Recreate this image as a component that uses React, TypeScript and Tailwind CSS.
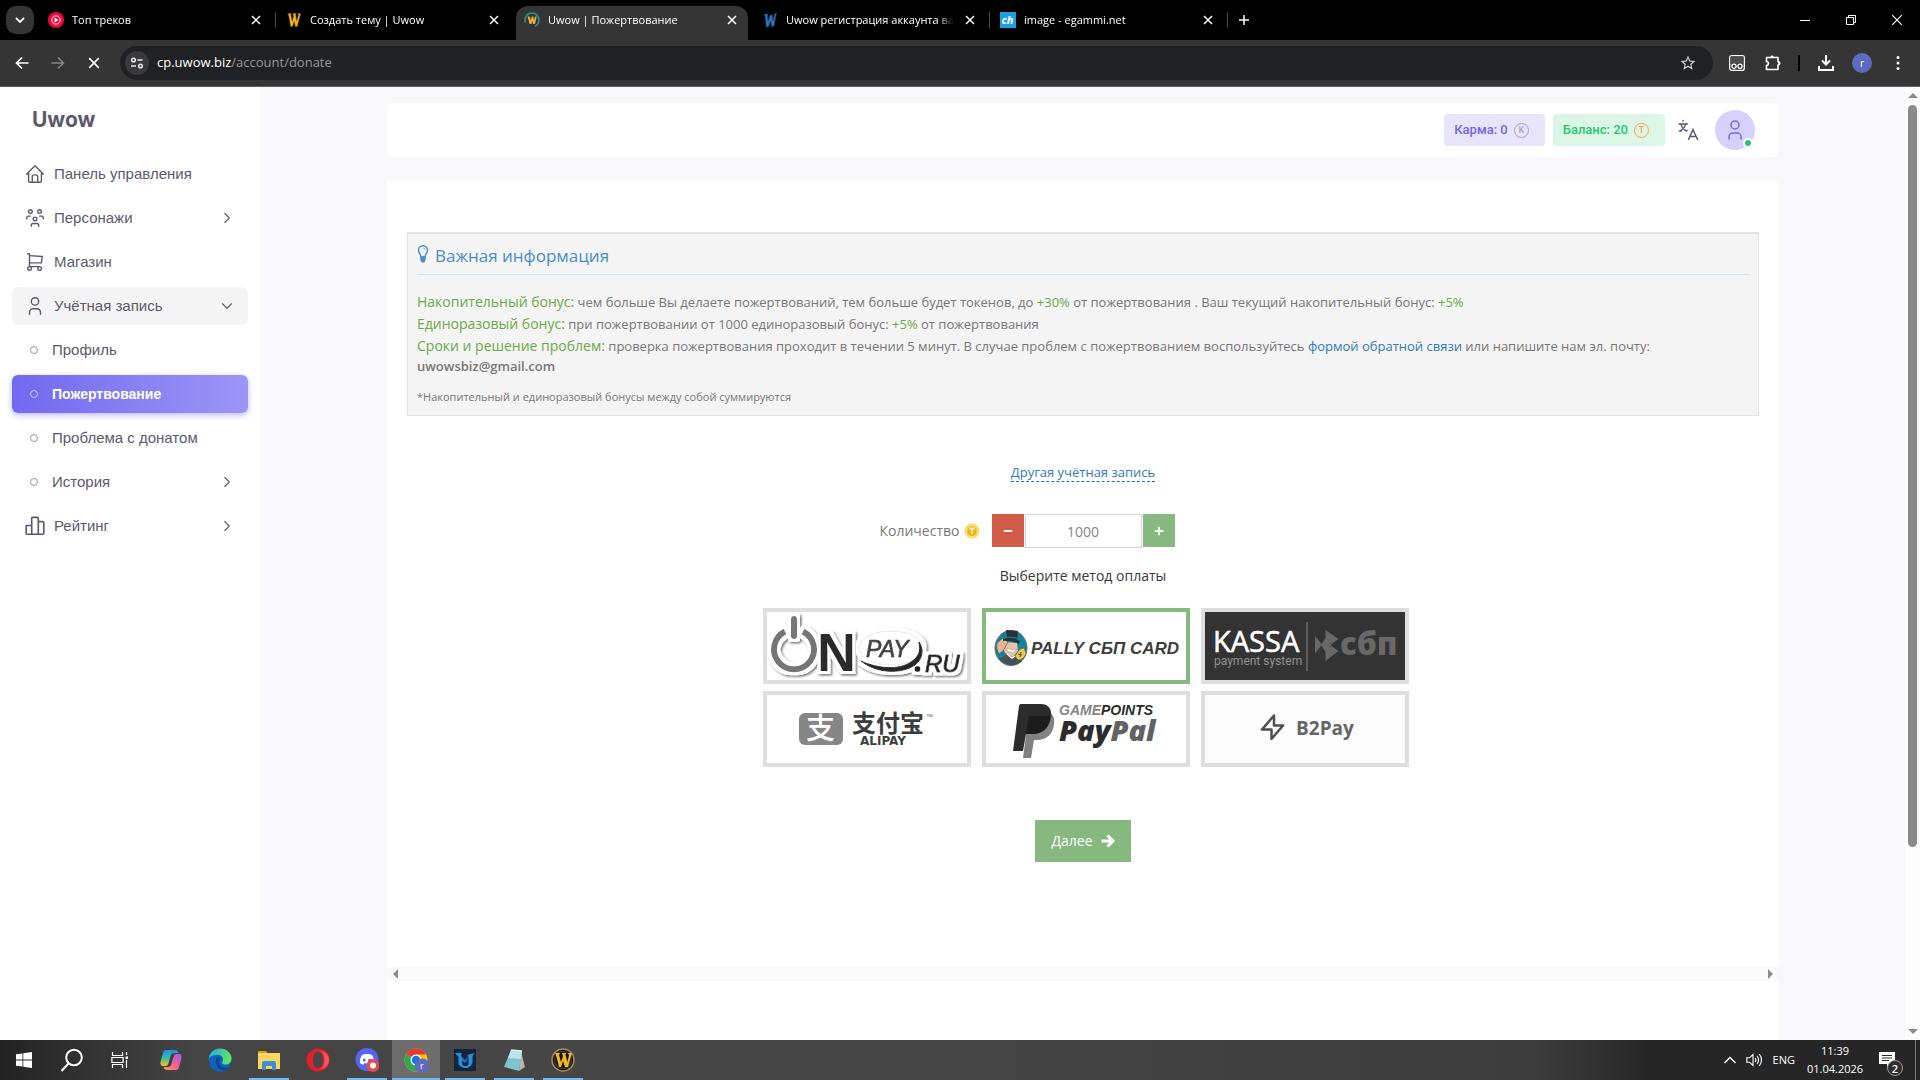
import { useState } from "react";
import type { ReactNode } from "react";
import { TbHome, TbUser, TbUsersGroup, TbShoppingCart, TbChevronDown, TbChevronRight } from "react-icons/tb";
import { FaMinus, FaPlus } from "react-icons/fa";
import { MdStarOutline } from "react-icons/md";

const uiFont = "font-['Open_Sans','Noto_Sans',sans-serif]";
const menuFont = "font-['Liberation_Sans',Arial,sans-serif]";

const BROWSER_TABS = [
  { title: "Топ треков", icon: "music", active: false },
  { title: "Создать тему | Uwow", icon: "gold", active: false },
  { title: "Uwow | Пожертвование", icon: "ring", active: true },
  { title: "Uwow регистрация аккаунта варкрафт", icon: "blue", active: false },
  { title: "image - egammi.net", icon: "ch", active: false },
] as const;

function Favicon({ kind }: { kind: string }) {
  return (
    <svg viewBox="0 0 16 16" className="size-4 shrink-0" aria-hidden="true">
      {kind === "music" && (
        <>
          <circle cx="8" cy="8" r="8" fill="#f5063d" />
          <circle cx="8" cy="8" r="4.2" fill="none" stroke="#fff" strokeWidth="0.9" />
          <path d="M6.6 5.6v4.8L10.4 8z" fill="#fff" />
        </>
      )}
      {kind === "gold" && (
        <path d="M1.5 1.5h4l-.6 1.3L6.2 9 7.6 4 6.8 1.5h3.4L9.7 3l1 6 1.7-6-.8-1.5h3.1l-3.4 13h-2L8.2 9.5l-1.6 5h-2L2.6 3z" fill="#efb428" stroke="#7a4a05" strokeWidth="0.5" />
      )}
      {kind === "ring" && (
        <>
          <path d="M1.4 10.5A7 7 0 1 1 11 14.4" fill="none" stroke="#2f8e9b" strokeWidth="1.6" />
          <path d="M3.5 4.5h2.3l1 4 1-4h1.5l.9 4 .9-4h1.7L11 12H9.2L8.4 9l-1 3H5.6z" fill="#e9b23c" />
        </>
      )}
      {kind === "blue" && (
        <path d="M2 2h4l-.5 2 .7 5L8 3h2.5l.4 6 1.6-7 2-1.5L12 14l-2.4.8L8.5 9l-2 6H4.3L3 4z" fill="#2f72b5" stroke="#173f71" strokeWidth="0.6" />
      )}
      {kind === "ch" && (
        <>
          <rect width="16" height="16" fill="#1ba1e2" />
          <text x="1.5" y="12" fontSize="11" fontWeight="700" fontStyle="italic" fill="#fff" fontFamily="Open Sans">ch</text>
        </>
      )}
    </svg>
  );
}

function CloseGlyph({ className }: { className: string }) {
  return (
    <svg viewBox="0 0 10 10" className={className} stroke="currentColor" fill="none" aria-hidden="true">
      <path d="M1 1l8 8M9 1l-8 8" />
    </svg>
  );
}

function TabStrip() {
  return (
    <div className="flex h-10 shrink-0 items-end bg-black text-white">
      <button type="button" aria-label="Поиск вкладок" className="mb-1.5 ml-1.5 mr-1.5 flex size-7 items-center justify-center rounded-[10px] bg-[#353535]">
        <svg viewBox="0 0 10 10" className="size-2.5" fill="none" stroke="#fff" strokeWidth="1.8">
          <path d="M1 3l4 4 4-4" />
        </svg>
      </button>
      <div className="flex gap-1.5">
        {BROWSER_TABS.map((tab, i) => (
          <div
            key={tab.title}
            className={`relative flex h-[34px] w-[232px] items-center px-2 pb-1.5 ${
              tab.active ? "rounded-t-xl bg-[#353535]" : ""
            }`}
          >
            <Favicon kind={tab.icon} />
            <span className="ml-2 flex-1 overflow-hidden whitespace-nowrap text-[11px] leading-4 [mask-image:linear-gradient(90deg,#000_90%,transparent)]">
              {tab.title}
            </span>
            <button type="button" aria-label="Закрыть" className="ml-2 flex size-4 items-center justify-center">
              <CloseGlyph className="size-2.5 stroke-[1.5]" />
            </button>
            {(i === 0 || i > 2) && <span className="absolute -right-1 top-1.5 h-4 w-px bg-[#4a4a4a]" />}
          </div>
        ))}
      </div>
      <button type="button" aria-label="Новая вкладка" className="mb-1.5 ml-1.5 flex size-7 items-center justify-center">
        <svg viewBox="0 0 12 12" className="size-3" stroke="#fff" strokeWidth="1.5">
          <path d="M6 1v10M1 6h10" />
        </svg>
      </button>
      <div className="ml-auto flex h-10 items-center">
        <button type="button" aria-label="Свернуть" className="flex h-10 w-[46px] items-center justify-center">
          <span className="h-px w-2.5 bg-white" />
        </button>
        <button type="button" aria-label="Восстановить" className="flex h-10 w-[46px] items-center justify-center">
          <svg viewBox="0 0 10 10" className="size-2.5" fill="none" stroke="#fff">
            <path d="M.5 2.5h7v7h-7zM2.5 2.5v-2h7v7h-2" />
          </svg>
        </button>
        <button type="button" aria-label="Закрыть окно" className="flex h-10 w-[46px] items-center justify-center">
          <CloseGlyph className="size-3" />
        </button>
      </div>
    </div>
  );
}

function Toolbar() {
  return (
    <div className="flex h-[47px] shrink-0 items-center border-b border-[#5c5c5c] bg-[#353535] pl-2.5 pr-5 text-white">
      <button type="button" aria-label="Назад" className="flex size-6 items-center justify-center">
        <svg viewBox="0 0 14 14" className="size-3.5" fill="none" stroke="#fff" strokeWidth="1.7">
          <path d="M13.5 7H1.5M7 1.5L1.5 7 7 12.5" />
        </svg>
      </button>
      <button type="button" aria-label="Вперёд" className="ml-3 flex size-6 items-center justify-center">
        <svg viewBox="0 0 14 14" className="size-3.5" fill="none" stroke="#858585" strokeWidth="1.5">
          <path d="M.5 7h12M7 1.5L12.5 7 7 12.5" />
        </svg>
      </button>
      <button type="button" aria-label="Остановить" className="ml-3 flex size-6 items-center justify-center">
        <CloseGlyph className="size-3 stroke-[1.4]" />
      </button>
      <div className="ml-3.5 flex h-[34px] flex-1 items-center rounded-full bg-[#202124] pl-[5px] pr-4">
        <span className="flex size-6 items-center justify-center rounded-full bg-[#3a3a3c]">
          <svg viewBox="0 0 14 12" className="h-3 w-3.5" fill="none" stroke="#e8e8e8" strokeWidth="1.5">
            <circle cx="3.5" cy="3" r="1.8" />
            <path d="M7.5 3h5M1 9h5" />
            <circle cx="10.5" cy="9" r="1.8" />
          </svg>
        </span>
        <span className="ml-2 flex-1 text-[13px]">
          cp.uwow.biz<span className="text-[#969696]">/account/donate</span>
        </span>
        <MdStarOutline className="size-[18px] text-[#d0d0d0]" />
      </div>
      <svg viewBox="0 0 16 16" className="ml-4 size-4" fill="none" stroke="#fff" strokeWidth="1.3">
        <rect x="0.7" y="0.7" width="14.6" height="14.6" rx="2" />
        <rect x="1.5" y="1.5" width="13" height="7" fill="#4d4d4d" stroke="none" />
        <circle cx="5" cy="11.3" r="2.1" />
        <circle cx="11" cy="11.3" r="2.1" />
      </svg>
      <svg viewBox="0 0 18 18" className="ml-[19px] size-[18px]" fill="none" stroke="#fff" strokeWidth="1.6" strokeLinejoin="round">
        <path d="M2.5 3.5h11.500v4.300c2 0 2 3.200 0 3.200v4.500H2.500v-4c2.600-.3 2.600-3.700 0-4z" />
        <path d="M6.5 3.200c0-2.200 3.200-2.200 3.200 0z" fill="#fff" stroke="none" />
        <path d="M14.5 7.600c2.600 0 2.600 3.600 0 3.600z" fill="#fff" stroke="none" />
      </svg>
      <span className="ml-4 h-4 w-0.5 bg-black" />
      <svg viewBox="0 0 16 16" className="ml-[18px] size-4" fill="none" stroke="#fff" strokeWidth="2">
        <path d="M8 0v9M4 5.5l4 4 4-4M1 11v4h14v-4" />
      </svg>
      <span className="ml-[18px] flex size-5 items-center justify-center rounded-full bg-[#5c6bc0] text-[10px] leading-none">r</span>
      <svg viewBox="0 0 4 16" className="ml-6 h-4 w-1" fill="#fff">
        <circle cx="2" cy="2.5" r="1.5" />
        <circle cx="2" cy="8" r="1.5" />
        <circle cx="2" cy="13.5" r="1.5" />
      </svg>
    </div>
  );
}

function RatingIcon() {
  return (
    <svg viewBox="0 0 20 20" fill="none" stroke="currentColor" strokeWidth="1.5" strokeLinejoin="round">
      <path d="M2 9.500h5v8H2.800a.8.8 0 0 1-.8-.8zM7 17.500V3a.8.8 0 0 1 .8-.8h4.400A.8.8 0 0 1 13 3v14.500zM13 6h4.200a.8.8 0 0 1 .8.8v9.900a.8.8 0 0 1-.8.8H13" />
    </svg>
  );
}

type MenuItem = {
  label: string;
  icon?: ReactNode;
  arrow?: "right" | "down";
  state?: "open" | "active";
};

const MENU: MenuItem[] = [
  { label: "Панель управления", icon: <TbHome /> },
  { label: "Персонажи", icon: <TbUsersGroup />, arrow: "right" },
  { label: "Магазин", icon: <TbShoppingCart /> },
  { label: "Учётная запись", icon: <TbUser />, arrow: "down", state: "open" },
  { label: "Профиль" },
  { label: "Пожертвование", state: "active" },
  { label: "Проблема с донатом" },
  { label: "История", arrow: "right" },
  { label: "Рейтинг", icon: <RatingIcon />, arrow: "right" },
];

function Sidebar() {
  return (
    <aside className={`w-[260px] shrink-0 bg-white text-[#5d596c] ${menuFont}`}>
      <div className="flex h-[62px] items-center pl-8 pt-1 font-['Inter',sans-serif] text-[21px] font-bold">Uwow</div>
      <nav className="flex flex-col gap-1.5 px-3 pt-1.5">
        {MENU.map((item) => (
          <a
            key={item.label}
            href="#"
            className={`flex h-[38px] items-center rounded-md pr-3 text-[15px] ${item.icon ? "pl-3" : "pl-4"} ${
              item.state === "active"
                ? "bg-gradient-to-r from-[#7367f0] to-[#9e95f5] font-bold text-white shadow-[0_2px_6px_rgba(115,103,240,0.48)]"
                : ""
            } ${item.state === "open" ? "bg-[#f4f4f5]" : ""}`}
          >
            {item.icon ? (
              <span className="mr-2 [&>svg]:size-[22px] [&>svg]:stroke-[1.5]">{item.icon}</span>
            ) : (
              <span className="ml-0.5 mr-3.5 size-2 rounded-full border border-current opacity-60" />
            )}
            <span className={`flex-1 ${item.state === "active" ? "text-sm" : ""}`}>{item.label}</span>
            {item.arrow === "right" && <TbChevronRight className="size-[18px] stroke-[1.5]" />}
            {item.arrow === "down" && <TbChevronDown className="size-[18px] stroke-[1.5]" />}
          </a>
        ))}
      </nav>
    </aside>
  );
}

function TokenMark({ letter }: { letter: string }) {
  return (
    <span className="flex size-[15px] items-center justify-center rounded-full border border-current text-[9px] leading-none">
      {letter}
    </span>
  );
}

function Navbar() {
  return (
    <div className="flex h-[54px] shrink-0 items-center justify-end rounded-md bg-white pr-6 font-['Roboto',sans-serif] text-[13px] font-medium">
      <span className="flex h-8 items-center rounded bg-[#e7e4fb] pl-2.5 pr-4 text-[#7367f0]">
        <span className="mr-1.5">Карма: 0</span>
        <span className="text-[#a8a6b0]">
          <TokenMark letter="K" />
        </span>
      </span>
      <span className="ml-2 flex h-8 items-center rounded bg-[#dbf5e6] pl-2.5 pr-4 text-[#28c76f]">
        <span className="mr-1.5">Баланс: 20</span>
        <span className="text-[#ff9f43]">
          <TokenMark letter="T" />
        </span>
      </span>
      <button type="button" aria-label="Язык" className="ml-3 text-[#5d596c]">
        <svg viewBox="0 0 22 22" className="size-[22px]" fill="none" stroke="currentColor" strokeWidth="1.5" strokeLinecap="round">
          <path d="M2 5h8.500M6 1.500v.5M4 5c.5 3 2.500 5.500 5.500 7M8.500 5c-.5 3-2.500 5.500-5.500 7M2.500 12h2M8 11.500h2" />
          <path d="M11.500 20.500L16 10.500l4.500 10M13 17.500h6" />
        </svg>
      </button>
      <button type="button" aria-label="Профиль" className="relative ml-4 flex size-10 items-center justify-center rounded-full bg-[#d5d1fb] text-[#7367f0]">
        <TbUser className="size-6 stroke-[1.5]" />
        <span className="absolute bottom-0.5 right-0.5 size-2.5 rounded-full border-2 border-white bg-[#28c76f]" />
      </button>
    </div>
  );
}

function InfoPanel() {
  return (
    <section className="mx-5 mt-[51px] border border-t-2 border-[#e3e3e3] bg-[#f4f4f4] px-[9px] pb-2 text-[13px] text-[#777]">
      <h2 className="flex h-[41px] items-center gap-1.5 border-b border-[#cfe2f2] pt-1 text-[17px] text-[#478fca]">
        <svg viewBox="0 0 12 20" className="mb-1 h-[18px] w-3" fill="none" stroke="currentColor" strokeWidth="1.6">
          <path d="M3.8 13.5C3.8 10.5 1 9.300 1 5.800a5 5 0 0 1 10 0c0 3.500-2.800 4.700-2.800 7.700z" />
          <path d="M6.5 3.5c1 .2 1.600.8 1.800 1.800" strokeWidth="1" />
          <path d="M3 12.500h6v4L7.500 19.500h-3L3 16.500z" fill="currentColor" stroke="none" />
        </svg>
        Важная информация
      </h2>
      <div className="pt-4 leading-[22px]">
        <p>
          <span className="text-sm leading-[22px] text-[#69aa46]">Накопительный бонус:</span> чем больше Вы делаете пожертвований, тем
          больше будет токенов, до <span className="text-[#69aa46]">+30%</span> от пожертвования . Ваш текущий накопительный бонус:{" "}
          <span className="text-[#69aa46]">+5%</span>
        </p>
        <p>
          <span className="text-sm leading-[22px] text-[#69aa46]">Единоразовый бонус:</span> при пожертвовании от 1000 единоразовый
          бонус: <span className="text-[#69aa46]">+5%</span> от пожертвования
        </p>
        <p>
          <span className="text-sm leading-[22px] text-[#69aa46]">Сроки и решение проблем:</span> проверка пожертвования проходит в
          течении 5 минут. В случае проблем с пожертвованием воспользуйтесь{" "}
          <a href="#" className="text-[#337ab7]">
            формой обратной связи
          </a>{" "}
          или напишите нам эл. почту: <b className="block font-semibold leading-[18px]">uwowsbiz@gmail.com</b>
        </p>
      </div>
      <p className="pt-3 text-[11px] leading-5">*Накопительный и единоразовый бонусы между собой суммируются</p>
    </section>
  );
}

function OnpayLogo() {
  return (
    <svg viewBox="0 0 200 68" className="h-full w-full overflow-visible">
      <defs>
        <filter id="lift" x="-10%" y="-10%" width="120%" height="125%">
          <feMorphology in="SourceAlpha" operator="dilate" radius="3" result="fat" />
          <feFlood floodColor="#fff" />
          <feComposite in2="fat" operator="in" result="halo" />
          <feDropShadow in="halo" dx="1.5" dy="1.5" stdDeviation="1" floodColor="#000" floodOpacity="0.55" result="sh" />
          <feMerge>
            <feMergeNode in="sh" />
            <feMergeNode in="SourceGraphic" />
          </feMerge>
        </filter>
      </defs>
      <g filter="url(#lift)">
        <path d="M18 19.500a20 20 0 1 0 18 0" fill="none" stroke="#757575" strokeWidth="6" />
        <path d="M27 7v17" stroke="#777" strokeWidth="6" strokeLinecap="round" />
        <text x="50" y="59" fontSize="54" fontWeight="700" fill="#2a2a2a" fontFamily="Liberation Sans">N</text>
        <ellipse cx="124" cy="36" rx="32" ry="17" fill="#fff" stroke="#ddd" strokeWidth="0.7" />
        <path d="M94 49c18 8 38 9 50 1 8-5 10-11 8-20 5 8 4 17-4 23-14 10-40 8-54-4z" fill="#262626" stroke="#262626" />
        <text x="99" y="45" fontSize="23" fontStyle="italic" fill="#444" stroke="#444" strokeWidth="0.7" fontFamily="Liberation Sans">PAY</text>
        <circle cx="150.5" cy="57" r="3" fill="#222" />
        <text x="158" y="60" fontSize="24" fontStyle="italic" fill="#222" stroke="#222" strokeWidth="1" fontFamily="Liberation Sans">RU</text>
      </g>
    </svg>
  );
}

function PallyLogo() {
  return (
    <svg viewBox="0 0 200 68" className="h-full w-full">
      <ellipse cx="25" cy="36" rx="16" ry="17.5" fill="#148399" stroke="#5d6f73" />
      <path d="M13 47l8-5 9 3 6 4c-5 5-16 6-23-2z" fill="#4b5054" />
      <path d="M19 30l12 1 1 8-5 6-8-4-2-5z" fill="#eac3a4" />
      <path d="M11 31l6-5 5 4-5 9-4 3c-2-3-3-7-2-11z" fill="#e3b596" stroke="#4c4a48" strokeWidth="0.6" />
      <path d="M17 27l4-1-1-8 12 1-1 9 3 1-1 3c-5-3-12-4-16-3z" fill="#263238" />
      <path d="M21 25l10 1" stroke="#148399" />
      <path d="M21 36l5 2 5-1-4 4-6-2z" fill="#fff" stroke="#777" strokeWidth="0.4" />
      <path d="M34 37l4-1 2 5c-1 4-4 7-8 7l-3-4z" fill="#f0cb50" stroke="#665628" strokeWidth="0.6" />
      <path d="M35 40l-1 5M32 42l4 1" stroke="#584b25" />
      <path d="M21 42l5 4 3-2" stroke="#fff" strokeWidth="1.5" fill="none" />
      <text x="45" y="42" fontSize="17" fontWeight="700" fontStyle="italic" fill="#3d3d3d" fontFamily="Liberation Sans">PALLY СБП CARD</text>
    </svg>
  );
}

function KassaLogo() {
  return (
    <svg viewBox="0 0 200 68" className="h-full w-full bg-[#333]">
      <text x="8" y="40" fontSize="29" fill="#fff" stroke="#fff" strokeWidth="0.6" fontFamily="Open Sans">KASSA</text>
      <text x="9" y="53" fontSize="12" fill="#929292" fontFamily="Roboto">payment system</text>
      <path d="M102 10v49" stroke="#6b6b6b" strokeWidth="1.5" />
      {/* знак СБП: четыре треугольника вокруг центра */}
      <g fill="#686868">
        <path d="M110 24l7 8.5-7 9z" />
        <path d="M120.500 18l13 9-7 5-6-4z" />
        <path d="M120.500 49V38l6-4 7 5z" />
        <path d="M120.500 26l6 7-6 7-4.500-7z" />
      </g>
      <text x="135" y="43" fontSize="31" fontWeight="800" fill="#686868" fontFamily="Open Sans">сбп</text>
    </svg>
  );
}

function AlipayLogo() {
  return (
    <svg viewBox="0 0 200 68" className="h-full w-full">
      <rect x="32" y="18" width="44" height="32" rx="6" fill="#868686" />
      <text x="39" y="44" fontSize="29" fontWeight="500" fill="#fff" fontFamily="Noto Sans CJK SC">支</text>
      <text x="85" y="37" fontSize="24" fontWeight="700" fill="#3d3d3d" fontFamily="Noto Sans CJK SC">支付宝</text>
      <text x="159" y="24" fontSize="7" fill="#666" fontFamily="Liberation Sans">™</text>
      <text x="93" y="50" fontSize="12" fontWeight="700" fill="#3d3d3d" fontFamily="DejaVu Sans">ALIPAY</text>
    </svg>
  );
}

function PaypalLogo() {
  return (
    <svg viewBox="0 0 200 68" className="h-full w-full">
      <path d="M43 17h18c6 1 8 6 7 12-1 10-7 16-18 16h-2l-3 18H37z" fill="#818181" />
      <path d="M35 9h20c8 0 11 6 10 13-2 12-9 17-19 17h-6l-3 17H27L33 11c0-1 1-2 2-2z" fill="#2c2c2c" />
      <path d="M43 21h21c0 12-8 18-18 18h-6z" fill="#1c1c1c" />
      <text x="73" y="20" fontSize="14" fontWeight="700" fontStyle="italic" fill="#858585" fontFamily="Liberation Sans">
        GAME<tspan fill="#2c2c2c">POINTS</tspan>
      </text>
      <text x="73" y="46" fontSize="29" fontWeight="800" fontStyle="italic" fill="#2c2c2c" fontFamily="Open Sans">
        Pay<tspan fill="#626262">Pal</tspan>
      </text>
    </svg>
  );
}

function B2PayLogo() {
  return (
    <svg viewBox="0 0 200 68" className="h-full w-full bg-[#fcfcfc]">
      <path d="M69 20.500L57 34.500h9.500V44L78 30.500h-9z" fill="none" stroke="#4f4f4f" strokeWidth="2.5" strokeLinejoin="round" />
      <text x="91" y="40" fontSize="19" fontWeight="700" fill="#666" fontFamily="Open Sans">B2Pay</text>
    </svg>
  );
}

const METHODS = [
  { id: "onpay", label: "OnPay", logo: <OnpayLogo /> },
  { id: "pally", label: "Pally СБП Card", logo: <PallyLogo /> },
  { id: "kassa", label: "Kassa СБП", logo: <KassaLogo /> },
  { id: "alipay", label: "Alipay", logo: <AlipayLogo /> },
  { id: "paypal", label: "PayPal", logo: <PaypalLogo /> },
  { id: "b2pay", label: "B2Pay", logo: <B2PayLogo /> },
];

function DonateForm() {
  const [amount, setAmount] = useState("1000");
  const [method, setMethod] = useState("pally");

  function step(by: number) {
    setAmount((v) => String(Math.max(0, Number(v) + by)));
  }

  return (
    <form className="flex flex-col items-center pt-[47px]" onSubmit={(e) => e.preventDefault()}>
      <a href="#" className="border-b border-dashed border-[#2a62d6] text-[13px] leading-[18px] text-[#337ab7]">
        Другая учётная запись
      </a>
      {/* пустая колонка справа держит счётчик по центру карточки */}
      <div className="mt-8 grid grid-cols-[1fr_auto_1fr] items-center gap-x-3">
        <label htmlFor="amount" className="flex items-center gap-1 text-sm text-[#777]">
          Количество
          <svg viewBox="0 0 16 16" className="size-4" aria-hidden="true">
            <ellipse cx="8" cy="8" rx="7.5" ry="7.5" fill="#f7dd55" />
            <circle cx="8" cy="8" r="5.5" fill="#eeb21f" stroke="#fbe98a" />
            <path d="M5 5.500h6M8 5.500V11" stroke="#fff1ab" strokeWidth="1.8" />
          </svg>
        </label>
        <div className="flex items-start gap-px">
          <button type="button" aria-label="Меньше" onClick={() => step(-100)} className="flex h-[33px] w-8 items-center justify-center bg-[#d15b47] text-white">
            <FaMinus className="size-2.5" />
          </button>
          <input
            id="amount"
            value={amount}
            onChange={(e) => setAmount(e.target.value)}
            className="h-[34px] w-[117px] border border-[#d5d5d5] bg-white text-center text-sm text-[#858585] outline-none"
          />
          <button type="button" aria-label="Больше" onClick={() => step(100)} className="flex h-[33px] w-8 items-center justify-center bg-[#87b87f] text-white">
            <FaPlus className="size-2.5" />
          </button>
        </div>
        <span />
      </div>
      <p className="mt-[18px] text-sm leading-5 text-[#393939]">Выберите метод оплаты</p>
      <div className="mt-[22px] grid grid-cols-3 gap-x-[11px] gap-y-[7px] pl-1.5">
        {METHODS.map((m) => (
          <button
            key={m.id}
            type="button"
            aria-label={m.label}
            aria-pressed={method === m.id}
            onClick={() => setMethod(m.id)}
            className={`h-[76px] w-52 border-4 ${method === m.id ? "border-[#87b87f]" : "border-[#dedede]"}`}
          >
            {m.logo}
          </button>
        ))}
      </div>
      <button type="submit" className="mt-[53px] flex h-[42px] items-center gap-2 bg-[#87b87f] px-4 text-sm text-white">
        Далее
        <svg viewBox="0 0 14 14" className="size-3.5" fill="none" stroke="#fff" strokeWidth="3">
          <path d="M0.5 7h11M6.500 1.500L12 7l-5.500 5.500" />
        </svg>
      </button>
    </form>
  );
}

function PageScrollbar() {
  return (
    <div className="flex w-[15px] shrink-0 flex-col items-center bg-[#fcfcfc] py-1.5" aria-hidden="true">
      <svg viewBox="0 0 10 5" className="h-[5px] w-2.5" fill="#8b8b8b">
        <path d="M0 5l5-5 5 5z" />
      </svg>
      <div className="mt-[7px] h-[742px] w-[9px] rounded-full bg-[#8b8b8b]" />
      <svg viewBox="0 0 10 5" className="mt-auto h-[5px] w-2.5" fill="#8b8b8b">
        <path d="M0 0l5 5 5-5z" />
      </svg>
    </div>
  );
}

const APPS: { name: string; running?: boolean; focused?: boolean; art: ReactNode }[] = [
  {
    name: "Copilot",
    art: (
      <>
        <defs>
          <linearGradient id="cpA" x1="0" y1="0" x2="0" y2="1">
            <stop offset="0" stopColor="#1f8df0" />
            <stop offset="0.5" stopColor="#33bfa0" />
            <stop offset="1" stopColor="#f3c21b" />
          </linearGradient>
          <linearGradient id="cpB" x1="1" y1="0" x2="0" y2="1">
            <stop offset="0" stopColor="#9a5bf0" />
            <stop offset="0.5" stopColor="#f2609a" />
            <stop offset="1" stopColor="#ff9a4a" />
          </linearGradient>
        </defs>
        <path d="M7 2h9c2 0 3 1 3.500 3H15c-2 0-3 1-3.500 3L9.500 15c-.5 2-1.500 3-3 3H4c-2 0-3-2-2.500-4l2.500-9c.5-2 1.500-3 3-3z" fill="url(#cpA)" />
        <path d="M17 22H8c-2 0-3-1-3.500-3H9c2 0 3-1 3.500-3l2-7c.5-2 1.500-3 3-3H20c2 0 3 2 2.500 4l-2.500 9c-.5 2-1.500 3-3 3z" fill="url(#cpB)" />
      </>
    ),
  },
  {
    name: "Edge",
    art: (
      <>
        <defs>
          <linearGradient id="edA" x1="0" y1="0" x2="1" y2="0.3">
            <stop offset="0" stopColor="#25a8e8" />
            <stop offset="1" stopColor="#5be36a" />
          </linearGradient>
        </defs>
        <circle cx="12" cy="12" r="11.5" fill="#0f62b8" />
        <path d="M.6 11C1.500 4.500 6.500.5 12 .5c7 0 11.500 5 11.500 10 0 4-3 6-6 6-3.500 0-4-1.500-3-3 1-1.500 1-6-4-6.500C5.500 6.500 1.500 8.500.6 11z" fill="url(#edA)" />
        <path d="M10.500 8.500c-4 2-4 11 3 13.500 4 1 7-1 8.500-3-5 2-11-.5-11-5 0-2.500 1.500-3 1.500-4s-1-1.500-2-1.500z" fill="#0b4a93" />
      </>
    ),
  },
  {
    name: "Проводник",
    running: true,
    art: (
      <>
        <path d="M1 3h8l2 3H1z" fill="#dc9b12" />
        <path d="M1 5h22v16H1z" fill="#fcd462" />
        <path d="M5 22v-7a2 2 0 0 1 2-2h10a2 2 0 0 1 2 2v7h-4v-4H9v4z" fill="#3b8fd4" />
      </>
    ),
  },
  {
    name: "Opera",
    art: (
      <>
        <ellipse cx="12" cy="12" rx="11.5" ry="11.5" fill="#e01f2d" />
        <ellipse cx="12" cy="12" rx="5" ry="8.5" fill="#474747" />
        <path d="M14 3c6 2 6 16 0 18 12-1 12-17 0-18z" fill="#f6575f" />
      </>
    ),
  },
  {
    name: "Discord",
    running: true,
    art: (
      <>
        <circle cx="12" cy="11.5" r="11.5" fill="#5865f2" />
        <path d="M7 7c3-1.300 7-1.300 10 0 1.500 2.500 2.300 5 2 8-1.200 1-2.500 1.500-3.500 1.700l-1-1.600c-1.600.4-3.400.4-5 0l-1 1.600C7.500 16.500 6.200 16 5 15c-.3-3 .5-5.500 2-8z" fill="#fff" />
        <circle cx="9.3" cy="12" r="1.5" fill="#5865f2" />
        <circle cx="14.7" cy="12" r="1.5" fill="#5865f2" />
        <circle cx="18" cy="17.5" r="6.5" fill="#e5484d" />
        <circle cx="18" cy="17.5" r="3" fill="#fff" />
      </>
    ),
  },
  {
    name: "Chrome",
    running: true,
    focused: true,
    art: (
      <>
        <circle cx="12" cy="12" r="11.5" fill="#fbc116" />
        <path d="M12 12L2 6.300A11.500 11.500 0 0 1 22 6.500H12z" fill="#e33b2e" />
        <path d="M12 12L2 6.300A11.500 11.500 0 0 0 12 23.500l5-8.500z" fill="#2da94f" />
        <circle cx="12" cy="12" r="5.5" fill="#fff" />
        <circle cx="12" cy="12" r="4.3" fill="#1a73e8" />
        <circle cx="18" cy="18" r="7.5" fill="#5c6bc0" />
        <text x="16" y="21" fontSize="9" fill="#fff" fontFamily="Open Sans">r</text>
      </>
    ),
  },
  {
    name: "Uwow",
    running: true,
    art: (
      <>
        <rect x="1" y="1" width="22" height="22" fill="#14233c" />
        <path d="M2 5h7l-1 2 1 3v5c0 2 1.500 3 3.500 3s3-1 3-3v-5l-1-3 7-2-2 3v7c-1 3-4 5-7 5s-7-2-7-5V9z" fill="#2490dc" />
        <path d="M9 9l3 3 3-4-1 5-2 2-3-2z" fill="#1c6fb4" />
      </>
    ),
  },
  {
    name: "Блокнот",
    running: true,
    art: (
      <>
        <path d="M19 4l4 15-6 4z" fill="#b9b29c" />
        <path d="M9 2l11 1-3 20-15-4z" fill="#7cc4cf" />
        <path d="M9 2l11 1-1 8L6 10z" fill="#b9e4e8" />
        <path d="M9 2l11 1" stroke="#e8e8e8" strokeWidth="1.5" />
      </>
    ),
  },
  {
    name: "World of Warcraft",
    running: true,
    art: (
      <>
        <circle cx="12" cy="12" r="11" fill="#171310" stroke="#a98a55" strokeWidth="1.5" />
        <circle cx="12" cy="12" r="8.5" fill="none" stroke="#2b3a52" strokeWidth="1.5" />
        <path d="M4 5h5l-1 2 2 7 2-6-1-3h4l-.5 2 2 7 1.500-7-1-2h4l-4 14h-3l-2-6-2 6H8L5 7z" fill="#f2b725" />
      </>
    ),
  },
];

function Taskbar() {
  return (
    <footer className="flex h-10 shrink-0 items-center bg-[linear-gradient(90deg,#232324_0,#444_10%,#474747_40%,#3c3c3c_80%,#262627_86%)] text-white">
      <button type="button" aria-label="Пуск" className="flex h-10 w-12 items-center justify-center">
        <svg viewBox="0 0 16 16" className="size-4" fill="#fff">
          <path d="M0 2.300L6.500 1.400v6.200H0zM7.300 1.300L16 0v7.600H7.300zM0 8.400h6.500v6.200L0 13.700zM7.300 8.400H16V16l-8.700-1.300z" />
        </svg>
      </button>
      <button type="button" aria-label="Поиск" className="flex h-10 w-12 items-center justify-center">
        <svg viewBox="0 0 24 24" className="size-6" fill="none" stroke="#fff" strokeWidth="2">
          <circle cx="14" cy="9.5" r="7.8" />
          <path d="M8.500 15.500L1.500 23" />
        </svg>
      </button>
      <button type="button" aria-label="Представление задач" className="mr-[3px] flex h-10 w-12 items-center justify-center">
        <svg viewBox="0 0 18 16" className="h-4 w-[18px]" fill="none" stroke="#fff" strokeWidth="1.2">
          <path d="M1.500 0v3.500h10V0M1.500 16v-3.500h10V16M.9 5.500h11.200v5H.9zM15.500 0v3M15.500 8v8" />
          <rect x="14.5" y="4.5" width="2.5" height="2.5" fill="#fff" stroke="none" />
        </svg>
      </button>
      <div className="flex gap-px">
        {APPS.map((app) => (
          <button
            key={app.name}
            type="button"
            aria-label={app.name}
            className={`relative flex h-10 w-12 items-center justify-center ${app.focused ? "bg-[#6d6d6d]" : ""}`}
          >
            <svg viewBox="0 0 24 24" className="size-6">
              {app.art}
            </svg>
            {app.running && (
              <span className={`absolute bottom-0 h-0.5 bg-[#76b9ed] ${app.focused ? "inset-x-0" : "inset-x-1"}`} />
            )}
          </button>
        ))}
      </div>
      <div className="ml-auto flex h-10 items-center">
        <svg viewBox="0 0 12 8" className="h-2 w-3" fill="none" stroke="#fff" strokeWidth="1.3">
          <path d="M.5 7L6 1.500 11.500 7" />
        </svg>
        <svg viewBox="0 0 17 14" className="ml-2.5 h-3.5 w-[17px]" fill="none" stroke="#fff" strokeWidth="1.1">
          <path d="M.8 4.800h2.700L7 1.500v11L3.500 9.200H.8zM9 5a3 3 0 0 1 0 4M11 3.200a5.500 5.500 0 0 1 0 7.600M13.200 1.200a8.500 8.500 0 0 1 0 11.600" />
        </svg>
        <span className="ml-2.5 text-[11px]">ENG</span>
        <time className="ml-3 flex w-14 flex-col items-center text-[11px] leading-[18px]">
          <span>11:39</span>
          <span>01.04.2026</span>
        </time>
        <button type="button" aria-label="Уведомления" className="relative ml-4 mr-5 h-5 w-4">
          <svg viewBox="0 0 16 20" className="h-5 w-4">
            <path d="M0 2h16v12h-5l-3 4v-4H0z" fill="#fff" />
            <path d="M3 5.500h10M3 8h10M3 10.500h7" stroke="#2a2a2b" />
          </svg>
          <span className="absolute -bottom-1.5 -right-2 flex size-4 items-center justify-center rounded-full border border-[#999] bg-[#2e2e2f] text-[11px] font-semibold leading-none">
            2
          </span>
        </button>
        <span className="mr-1 h-10 w-px bg-[#777]" />
      </div>
    </footer>
  );
}

export default function App() {
  return (
    <div className={`flex h-screen flex-col overflow-hidden ${uiFont}`}>
      <TabStrip />
      <Toolbar />
      <div className="flex min-h-0 flex-1 bg-[#f8f7fa]">
        <Sidebar />
        <main className="flex min-w-0 flex-1 flex-col pl-[25px] pr-6 pt-4">
          <div className="mx-auto flex min-h-0 w-full max-w-[1392px] flex-1 flex-col">
            <Navbar />
            <div className="mt-6 flex min-h-0 flex-1 flex-col bg-white">
              <InfoPanel />
              <DonateForm />
              <div className="mb-[59px] mt-auto flex h-[15px] shrink-0 items-center justify-between bg-[#fafafa] px-1.5" aria-hidden="true">
                <svg viewBox="0 0 5 10" className="h-2.5 w-[5px]" fill="#8b8b8b">
                  <path d="M5 0v10L0 5z" />
                </svg>
                <svg viewBox="0 0 5 10" className="h-2.5 w-[5px]" fill="#8b8b8b">
                  <path d="M0 0v10l5-5z" />
                </svg>
              </div>
            </div>
          </div>
        </main>
        <PageScrollbar />
      </div>
      <Taskbar />
    </div>
  );
}
